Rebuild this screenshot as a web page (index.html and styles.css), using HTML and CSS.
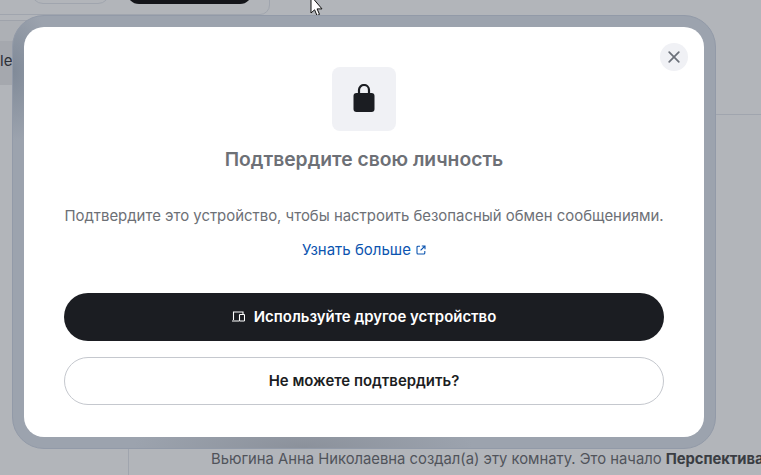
FILE: index.html
```html
<!DOCTYPE html>
<html lang="ru">
<head>
<meta charset="utf-8">
<title>Подтвердите свою личность</title>
<link rel="stylesheet" href="styles.css">
</head>
<body>
<div class="app">
  <aside class="sidebar">
    <div class="side-top"></div>
    <div class="side-item">le</div>
  </aside>
  <main class="main">
    <div class="main-head"></div>
    <p class="created">Вьюгина Анна Николаевна создал(а) эту комнату. Это начало <b>Перспектива</b></p>
  </main>
</div>
<div class="menu">
  <span class="menu-btn-a"></span>
  <span class="menu-btn-b"></span>
</div>
<svg class="cursor" width="14" height="18" viewBox="0 0 14 18"><path d="M1 -4V13L4.6 9.8L7 15.5L9.5 14.4L7.1 8.9H12Z" fill="#fff" stroke="#111" stroke-width="1"/></svg>
<section class="modal">
  <div class="card">
    <button class="close" aria-label="Закрыть">
      <svg width="12" height="12" viewBox="0 0 12 12"><path d="M1.2 1.2L10.8 10.8M10.8 1.2L1.2 10.8" stroke="#6b7079" stroke-width="1.7" stroke-linecap="round"/></svg>
    </button>
    <div class="lock-box">
      <svg width="24" height="30" viewBox="0 0 24 30"><path d="M7 12V6a5 5 0 0 1 10 0V12" fill="none" stroke="#1b1d22" stroke-width="2.2"/><rect x="1.5" y="9" width="21" height="19" rx="3" fill="#1b1d22"/></svg>
    </div>
    <h1 class="title">Подтвердите свою личность</h1>
    <p class="desc">Подтвердите это устройство, чтобы настроить безопасный обмен сообщениями.</p>
    <a class="learn">Узнать больше
      <svg width="10" height="10" viewBox="0 0 10 10"><path d="M4 1.2H2a1 1 0 0 0-1 1V8a1 1 0 0 0 1 1h5.8a1 1 0 0 0 1-1V6M5.8 1H9v3.2M9 1L4.6 5.4" fill="none" stroke="#0b54b0" stroke-width="1.1"/></svg>
    </a>
    <button class="btn primary">
      <svg width="13" height="11" viewBox="0 0 13 11"><path d="M1.5 9V1H11V3M0 10H7" fill="none" stroke="#fff" stroke-width="1.1"/><rect x="7.5" y="3.5" width="5" height="6.5" rx=".6" fill="#1b1d22" stroke="#fff" stroke-width="1.1"/></svg>
      Используйте другое устройство
    </button>
    <button class="btn secondary">Не можете подтвердить?</button>
  </div>
</section>
</body>
</html>
```
FILE: styles.css
```css
* { box-sizing: border-box; }
html, body { margin: 0; height: 100%; }
body {
  position: relative;
  overflow: hidden;
  width: 761px;
  height: 475px;
  background: #b2b5ba;
  font-family: Inter, "Liberation Sans", sans-serif;
}
.app { display: flex; height: 475px; }
.sidebar {
  width: 129px;
  flex: none;
  border-right: 1px solid #a0a5ae;
  padding-top: 20px;
}
.side-top {
  height: 21px;
  border-top: 1px solid #9fa3ab;
  background: #adb0b5;
}
.side-item {
  height: 44px;
  background: #a5a8ae;
  font-size: 15px;
  line-height: 40px;
  color: #2c3038;
  white-space: nowrap;
}
.main { flex: 1; min-width: 0; display: flex; flex-direction: column; }
.main-head { height: 115px; border-bottom: 1px solid #a0a5ae; flex: none; }
.created {
  margin: auto 0 0;
  padding: 0 0 7px 82px;
  font-size: 14.8px;
  line-height: 17px;
  color: #50535a;
  white-space: nowrap;
}
.created b { color: #3a3d43; font-weight: 700; letter-spacing: -.06px; }
.menu {
  position: absolute;
  left: -10px;
  top: -30px;
  width: 280px;
  height: 45px;
  border: 1px solid #a0a5ae;
  border-radius: 10px;
  background: #b2b5ba;
}
.menu-btn-a {
  position: absolute;
  left: 40px;
  top: 0;
  width: 79px;
  height: 33px;
  border: 1px solid #a0a5ae;
  border-radius: 12px;
}
.menu-btn-b {
  position: absolute;
  left: 136px;
  top: 0;
  width: 125px;
  height: 33px;
  background: #14151a;
  border-radius: 12px;
}
.cursor { position: absolute; left: 310px; top: 0; }
.modal {
  position: absolute;
  left: 12px;
  top: 15px;
  width: 704px;
  height: 434px;
  padding: 11px;
  border: 1px solid #929aa8;
  border-radius: 32px;
  background:
    radial-gradient(ellipse 40px 70px at 0 55px, #808a98, rgba(128, 138, 152, 0)),
    radial-gradient(ellipse 170px 40px at 290px 100%, #8b919b, rgba(139, 145, 155, 0)),
    #9ca3ae;
}
.card {
  position: relative;
  height: 100%;
  background: #fff;
  border-radius: 20px;
  padding: 40px 40px 0;
  display: flex;
  flex-direction: column;
  align-items: center;
}
.close {
  position: absolute;
  right: 16px;
  top: 16px;
  width: 28px;
  height: 28px;
  border: 0;
  border-radius: 50%;
  background: #f0f1f5;
  display: flex;
  align-items: center;
  justify-content: center;
  padding: 0;
}
.lock-box {
  width: 64px;
  height: 64px;
  border-radius: 8px;
  background: #f0f1f5;
  display: flex;
  align-items: center;
  justify-content: center;
}
.title {
  margin: 16px 0 0;
  font-size: 19.3px;
  line-height: 24px;
  font-weight: 600;
  color: #6d7076;
}
.desc {
  margin: 35px 0 0;
  font-size: 14.93px;
  line-height: 20px;
  color: #6d7076;
  white-space: nowrap;
}
.learn {
  margin-top: 14px;
  font-size: 15px;
  line-height: 20px;
  color: #0b54b0;
  display: flex;
  align-items: center;
  gap: 5px;
}
.btn {
  width: 600px;
  height: 48px;
  border-radius: 24px;
  font-family: inherit;
  font-size: 14.95px;
  font-weight: 600;
  display: flex;
  align-items: center;
  justify-content: center;
  gap: 9px;
  padding: 0 0 1px;
  flex: none;
}
.primary { margin-top: 33px; background: #1b1d22; color: #fff; border: 0; }
.secondary { margin-top: 16px; background: #fff; color: #1b1d22; border: 1px solid #c5c8ce; }
```
